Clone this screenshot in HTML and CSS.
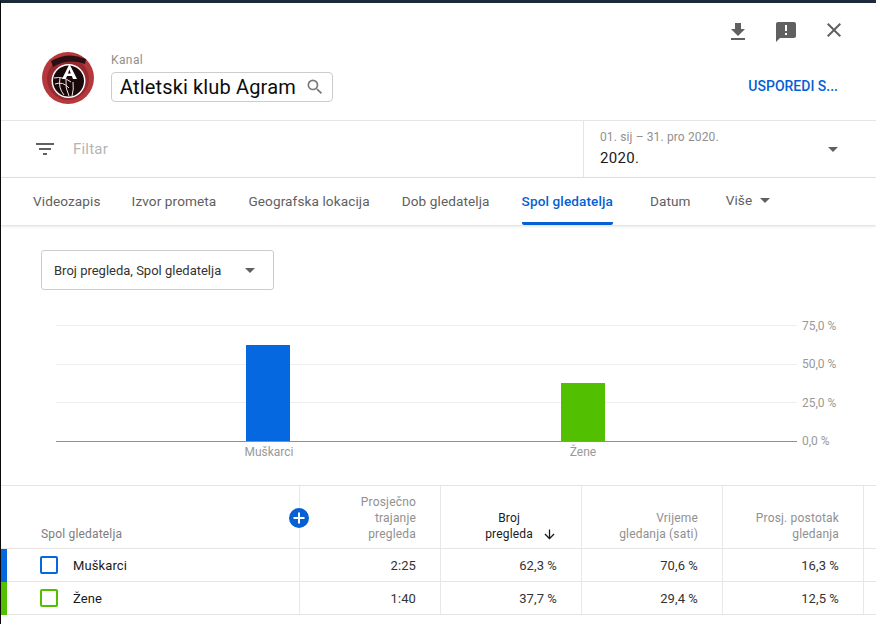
FILE: index.html
```html
<!DOCTYPE html>
<html lang="hr">
<head>
<meta charset="UTF-8" />
<meta name="viewport" content="width=device-width, initial-scale=1" />
<title>Spol gledatelja</title>
<link rel="stylesheet" href="styles.css">
</head>
<body>
<div class="page">
  <header class="top">
    <div class="top-icons">
      <svg class="icon" viewBox="0 0 24 24"><path d="M19 9h-4V3H9v6H5l7 7 7-7zM5 18v2h14v-2H5z"/></svg>
      <svg class="icon" viewBox="0 0 24 24"><path d="M20 2H4c-1.100 0-2 .9-2 2v18l4-4h14c1.100 0 2-.9 2-2V4c0-1.100-.9-2-2-2zm-7 9h-2V5h2v6zm0 4h-2v-2h2v2z"/></svg>
      <svg class="icon icon-close" viewBox="0 0 24 24"><path d="M19 6.410 17.590 5 12 10.590 6.410 5 5 6.410 10.590 12 5 17.590 6.410 19 12 13.410 17.590 19 19 17.590 13.410 12z"/></svg>
    </div>
    <div class="channel">
      <svg class="logo" viewBox="0 0 52 52">
        <circle cx="26" cy="26" r="26" fill="#b5383d"/>
        <circle cx="26" cy="27" r="21" fill="#96292e"/>
        <path d="M9 9 Q26 -1 44 7 L43 12 Q26 6 11 15 Z" fill="#2a1012"/>
        <circle cx="26.500" cy="29" r="17" fill="#fff"/>
        <circle cx="26.500" cy="29" r="15.500" fill="#190809"/>
        <path d="M12 26 Q21 24 29 30 M13 32 Q21 29 27 36 M18 26 Q16 36 22 43 M24 28 Q23 36 27 44 M31 30 Q32 37 30 44" stroke="#f1e6e6" stroke-width="1" fill="none"/>
        <path d="M27.500 12 L35 27 H31 L29.800 24 H25 L23.800 27 H20 Z M27.400 17.500 L26 21.500 H28.800 Z" fill="#fff" fill-rule="evenodd"/>
      </svg>
      <div class="channel-info">
        <div class="channel-label">Kanal</div>
        <div class="channel-box">
          <span class="channel-name">Atletski klub Agram</span>
          <svg class="icon-search" viewBox="0 0 24 24"><path d="M15.500 14h-.79l-.28-.27A6.470 6.470 0 0 0 16 9.500 6.500 6.500 0 1 0 9.500 16c1.610 0 3.090-.59 4.230-1.570l.27.28v.79l5 4.990L20.490 19l-4.990-5zm-6 0C7.010 14 5 11.990 5 9.500S7.010 5 9.500 5 14 7.010 14 9.500 11.990 14 9.500 14z"/></svg>
        </div>
      </div>
      <a class="compare">USPOREDI S...</a>
    </div>
  </header>

  <section class="filter-row">
    <div class="filter">
      <svg class="icon-filter" viewBox="0 0 24 24"><path d="M10 18h4v-2h-4v2zM3 6v2h18V6H3zm3 7h12v-2H6v2z"/></svg>
      <span class="filter-text">Filtar</span>
    </div>
    <div class="date">
      <div>
        <div class="date-range">01. sij – 31. pro 2020.</div>
        <div class="date-year">2020.</div>
      </div>
      <span class="arrow"></span>
    </div>
  </section>

  <nav class="tabs">
    <a class="tab first-tab">Videozapis</a>
    <a class="tab">Izvor prometa</a>
    <a class="tab">Geografska lokacija</a>
    <a class="tab">Dob gledatelja</a>
    <a class="tab active">Spol gledatelja</a>
    <a class="tab date-tab">Datum</a>
    <a class="tab more">Više <span class="arrow"></span></a>
  </nav>

  <div class="chart-area">
    <div class="metric-select">
      <span>Broj pregleda, Spol gledatelja</span>
      <span class="arrow"></span>
    </div>
    <svg class="chart" width="875" height="160" viewBox="0 0 875 160">
      <line class="grid" x1="55" x2="796" y1="16.500" y2="16.500"/>
      <line class="grid" x1="55" x2="796" y1="55.500" y2="55.500"/>
      <line class="grid" x1="55" x2="796" y1="93.500" y2="93.500"/>
      <rect x="245" y="36" width="44" height="96" fill="#0668e1"/>
      <rect x="560" y="74" width="44" height="58" fill="#52bf00"/>
      <line class="axis" x1="55" x2="796" y1="132.500" y2="132.500"/>
      <text class="tick" x="801" y="21">75,0 %</text>
      <text class="tick" x="801" y="59">50,0 %</text>
      <text class="tick" x="801" y="98">25,0 %</text>
      <text class="tick" x="801" y="136">0,0 %</text>
      <text class="cat" x="268" y="147">Muškarci</text>
      <text class="cat" x="582" y="147">Žene</text>
    </svg>
  </div>

  <div class="table">
    <div class="row head">
      <div class="cell first">
        Spol gledatelja
        <span class="add"><svg viewBox="0 0 20 20"><path d="M9 4.500h2V9h4.500v2H11v4.500H9V11H4.500V9H9z" fill="#fff"/></svg></span>
      </div>
      <div class="cell">Prosječno<br>trajanje<br>pregleda</div>
      <div class="cell sorted">
        <div class="sorted-text">Broj<br>pregleda</div>
        <svg class="icon-sort" viewBox="0 0 24 24"><path d="M20 12l-1.410-1.410L13 16.170V4h-2v12.170l-5.580-5.590L4 12l8 8 8-8z"/></svg>
      </div>
      <div class="cell">Vrijeme<br>gledanja (sati)</div>
      <div class="cell">Prosj. postotak<br>gledanja</div>
      <div class="cell last"></div>
    </div>
    <div class="row">
      <div class="cell first"><i class="stripe blue"></i><i class="check blue"></i>Muškarci</div>
      <div class="cell">2:25</div>
      <div class="cell">62,3 %</div>
      <div class="cell">70,6 %</div>
      <div class="cell">16,3 %</div>
      <div class="cell last"></div>
    </div>
    <div class="row">
      <div class="cell first"><i class="stripe green"></i><i class="check green"></i>Žene</div>
      <div class="cell">1:40</div>
      <div class="cell">37,7 %</div>
      <div class="cell">29,4 %</div>
      <div class="cell">12,5 %</div>
      <div class="cell last"></div>
    </div>
  </div>
</div>
</body>
</html>
```

FILE: styles.css
```css
html, body {
  margin: 0;
  height: 100%;
  overflow: hidden;
}
body {
  font-family: Roboto, "Liberation Sans", sans-serif;
  background: #fff;
  color: #0d0d0d;
}
.page {
  height: 621px;
  border-top: 3px solid #1d2a3a;
  border-left: 1px solid #0a0a0a;
  background: #fff;
}

/* vrh */
.top {
  height: 117px;
  border-bottom: 1px solid #e5e5e5;
}
.top-icons {
  display: flex;
  justify-content: flex-end;
  gap: 24px;
  padding: 17px 30px 0 0;
  height: 24px;
}
.icon {
  width: 24px;
  height: 24px;
  fill: #606060;
}
.icon-close {
  margin-top: -2px;
}
.channel {
  display: flex;
  align-items: flex-start;
  padding: 0 38px 0 41px;
}
.logo {
  width: 52px;
  height: 52px;
  margin: 8px 17px 0 0;
}
.channel-info {
  flex-grow: 1;
  margin-top: 9px;
}
.channel-label {
  font-size: 12px;
  line-height: 14px;
  letter-spacing: 0.4px;
  color: #909090;
  margin-bottom: 5px;
}
.channel-box {
  display: inline-flex;
  align-items: center;
  width: 222px;
  height: 30px;
  box-sizing: border-box;
  border: 1px solid #ccc;
  border-radius: 4px;
  padding: 0 8px;
}
.channel-name {
  font-size: 20px;
  letter-spacing: 0.15px;
  white-space: nowrap;
  flex-grow: 1;
}
.icon-search {
  width: 20px;
  height: 20px;
  margin-right: -1px;
  fill: #7a7a7a;
}
.compare {
  margin-top: 34px;
  font-size: 14px;
  line-height: 16px;
  font-weight: 500;
  color: #065fd4;
}

/* filtar */
.filter-row {
  display: flex;
  height: 56px;
  border-bottom: 1px solid #e5e5e5;
}
.filter {
  display: flex;
  align-items: center;
  width: 583px;
  padding-left: 32px;
  box-sizing: border-box;
  border-right: 1px solid #e5e5e5;
}
.icon-filter {
  width: 24px;
  height: 24px;
  fill: #606060;
}
.filter-text {
  margin-left: 16px;
  font-size: 15px;
  letter-spacing: 0.2px;
  color: #b5b5b5;
}
.date {
  flex-grow: 1;
  display: flex;
  align-items: center;
  justify-content: space-between;
  padding: 0 38px 0 16px;
}
.date-range {
  font-size: 12px;
  line-height: 14px;
  letter-spacing: 0.13px;
  color: #909090;
  margin-bottom: 5px;
  margin-top: -1px;
}
.date-year {
  font-size: 15px;
  line-height: 18px;
  letter-spacing: 0.3px;
  color: #1a1a1a;
}
.arrow {
  display: inline-block;
  width: 0;
  height: 0;
  border-left: 5px solid transparent;
  border-right: 5px solid transparent;
  border-top: 5px solid #606060;
}

/* tabovi */
.tabs {
  display: flex;
  height: 47px;
  padding-left: 32px;
  gap: 32px;
  box-shadow: 0 1px 3px rgba(0, 0, 0, 0.16);
}
.tab {
  font-size: 13.6px;
  letter-spacing: 0.1px;
  line-height: 46px;
  color: #606060;
  white-space: nowrap;
}
.first-tab {
  margin-right: -1px;
}
.tab.active {
  color: #065fd4;
  font-weight: 500;
  letter-spacing: 0.1px;
  height: 47px;
  box-sizing: border-box;
  border-bottom: 3px solid #065fd4;
  border-radius: 0 0 2px 2px;
}
.date-tab {
  margin-left: 5px;
}
.tab.more {
  margin-left: 3px;
  line-height: 44px;
}
.tab.more .arrow {
  margin-left: 4px;
  vertical-align: 2px;
}

/* graf */
.chart-area {
  height: 261px;
  box-sizing: border-box;
  padding-top: 25px;
  border-bottom: 1px solid #e5e5e5;
}
.metric-select {
  display: flex;
  align-items: center;
  justify-content: space-between;
  width: 233px;
  height: 40px;
  box-sizing: border-box;
  margin-left: 40px;
  padding: 0 18px 0 12px;
  border: 1px solid #ccc;
  border-radius: 3px;
  font-size: 13px;
  color: #333;
}
.chart {
  display: block;
  margin-top: 19px;
}
.grid {
  stroke: #eeeeee;
  stroke-width: 1;
}
.axis {
  stroke: #8f8f8f;
  stroke-width: 1;
}
.tick, .cat {
  font-size: 12px;
  fill: #999;
}
.cat {
  text-anchor: middle;
}

/* tablica */
.row {
  display: grid;
  grid-template-columns: 299px 141px 141px 141px 141px 1fr;
  height: 33px;
  box-sizing: border-box;
  border-bottom: 1px solid #e5e5e5;
}
.row.head {
  height: 63px;
}
.cell {
  display: flex;
  align-items: center;
  justify-content: flex-end;
  padding-right: 24px;
  border-right: 1px solid #e8e8e8;
  font-size: 13px;
  letter-spacing: 0.1px;
  color: #333;
  text-align: right;
  position: relative;
}
.cell.last {
  border-right: none;
  padding: 0;
}
.cell.first {
  justify-content: flex-start;
  padding: 0 0 0 72px;
  color: #1a1a1a;
}
.head .cell {
  align-items: flex-end;
  padding-bottom: 6px;
  font-size: 12px;
  line-height: 16px;
  letter-spacing: 0.18px;
  color: #909090;
}
.head .cell.first {
  padding-left: 40px;
  color: #7d7d7d;
}
.head .cell.sorted {
  color: #1a1a1a;
}
.head .cell.last {
  padding: 0;
}
.sorted-text {
  text-align: center;
}
.icon-sort {
  width: 15px;
  height: 15px;
  fill: #1a1a1a;
  margin-left: 9px;
}
.add {
  position: absolute;
  right: -10px;
  top: 22px;
  width: 20px;
  height: 20px;
  border-radius: 50%;
  background: #065fd4;
  z-index: 1;
}
.add svg {
  display: block;
}
.stripe {
  position: absolute;
  left: 0;
  top: 0;
  bottom: -1px;
  width: 6px;
}
.check {
  position: absolute;
  left: 39px;
  top: 7px;
  width: 18px;
  height: 18px;
  box-sizing: border-box;
  border: 2px solid;
  border-radius: 2px;
}
.stripe.blue { background: #0668e1; }
.stripe.green { background: #52bf00; }
.check.blue { border-color: #0668e1; }
.check.green { border-color: #52bf00; }
```
